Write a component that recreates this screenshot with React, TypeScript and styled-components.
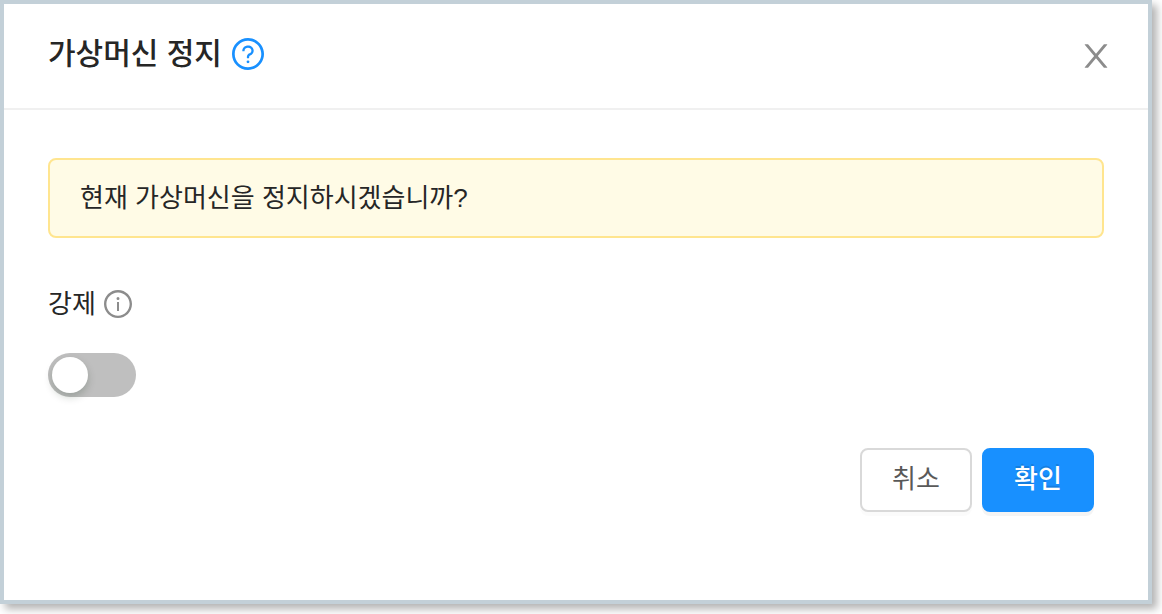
import React, { useState } from "react";
import styled, { createGlobalStyle } from "styled-components";

const GlobalStyle = createGlobalStyle`
  *, *::before, *::after { box-sizing: border-box; }
  body {
    margin: 0;
    background: #fff;
    color: #262626;
    font-family: "Liberation Sans", "Noto Sans CJK KR", sans-serif;
    font-size: 26px;
    line-height: 44px;
  }
`;

const Dialog = styled.section`
  margin: 0 10px 10px 0;
  border: 4px solid #c3d0d8;
  background: #fff;
  box-shadow: 5px 5px 8px 0 rgba(0, 0, 0, 0.3);
`;

const Header = styled.header`
  display: flex;
  align-items: center;
  justify-content: space-between;
  height: 106px;
  padding: 0 36px 4px 44px;
  border-bottom: 2px solid #f0f0f0;
`;

const TitleGroup = styled.div`
  display: flex;
  align-items: center;
  gap: 10px;
`;

const Title = styled.h1`
  margin: 0;
  font-size: 30px;
  font-weight: 500;
  line-height: 44px;
`;

const IconButton = styled.button<{ $color: string }>`
  display: flex;
  padding: 0;
  border: 0;
  background: none;
  color: ${(p) => p.$color};
  cursor: pointer;
`;

const CloseButton = styled(IconButton)`
  padding-top: 4px;
`;

const Icon = styled.svg<{ $size: number }>`
  display: block;
  width: ${(p) => p.$size}px;
  height: ${(p) => p.$size}px;
  fill: currentColor;
`;

const Body = styled.form`
  padding: 48px 44px 88px;
`;

const Alert = styled.div`
  padding: 16px 30px;
  border: 2px solid #ffe58f;
  border-radius: 8px;
  background: #fffbe6;
`;

const Field = styled.div`
  display: flex;
  flex-direction: column;
  align-items: flex-start;
  gap: 27px;
  margin-top: 44px;
`;

const LabelRow = styled.div`
  display: flex;
  align-items: center;
  gap: 8px;
`;

const Switch = styled.input`
  appearance: none;
  display: flex;
  width: 88px;
  height: 44px;
  margin: 0;
  padding: 4px;
  border-radius: 22px;
  background: #bfbfbf;
  cursor: pointer;

  &::before {
    content: "";
    width: 36px;
    height: 36px;
    border-radius: 50%;
    background: #fff;
    box-shadow: 0 4px 8px rgba(0, 35, 11, 0.2);
  }

  &:checked {
    justify-content: flex-end;
    background: #1890ff;
  }
`;

const Actions = styled.div`
  display: flex;
  justify-content: flex-end;
  gap: 10px;
  margin-top: 51px;
  padding-right: 10px;
`;

const Button = styled.button<{ $primary?: boolean }>`
  min-width: 112px;
  height: 64px;
  padding: 0 28px 2px;
  border: 2px solid ${(p) => (p.$primary ? "#1890ff" : "#d9d9d9")};
  border-radius: 8px;
  background: ${(p) => (p.$primary ? "#1890ff" : "#fff")};
  color: ${(p) => (p.$primary ? "#fff" : "#595959")};
  box-shadow: 0 4px 0 rgba(0, 0, 0, ${(p) => (p.$primary ? 0.045 : 0.016)});
  text-shadow: ${(p) => (p.$primary ? "0 -2px 0 rgba(0, 0, 0, 0.12)" : "none")};
  font: inherit;
  font-weight: ${(p) => (p.$primary ? 500 : 400)};
  cursor: pointer;
`;

const RING =
  "M512 64C264.6 64 64 264.6 64 512s200.6 448 448 448 448-200.6 448-448S759.4 64 512 64zm0 820c-205.4 0-372-166.6-372-372s166.6-372 372-372 372 166.6 372 372-166.6 372-372 372z";
const QUESTION =
  "M623.6 316.7C593.6 290.4 554 276 512 276s-81.6 14.5-111.6 40.7C369.2 344 352 380.7 352 420v7.6c0 4.4 3.6 8 8 8h48c4.4 0 8-3.6 8-8V420c0-44.1 43.1-80 96-80s96 35.9 96 80c0 31.1-22 59.6-56.1 72.7-21.2 8.1-39.2 22.3-52.1 40.9-13.1 19-19.9 41.8-19.9 64.9V620c0 4.4 3.6 8 8 8h48c4.4 0 8-3.6 8-8v-22.7a48.3 48.3 0 0130.9-44.8c59-22.7 97.1-74.7 97.1-132.5.1-39.3-17.1-76-48.3-103.3zM472 732a40 40 0 1080 0 40 40 0 10-80 0z";
const INFO =
  "M464 336a48 48 0 1096 0 48 48 0 10-96 0zm72 112h-48c-4.4 0-8 3.6-8 8v272c0 4.4 3.6 8 8 8h48c4.4 0 8-3.6 8-8V456c0-4.4-3.6-8-8-8z";
const CLOSE =
  "M563.8 512l262.5-312.9c4.4-5.2.7-13.1-6.1-13.1h-79.8c-4.7 0-9.2 2.1-12.3 5.7L511.6 449.8 295.1 191.7c-3-3.6-7.5-5.7-12.3-5.7H203c-6.8 0-10.5 7.9-6.1 13.1L459.4 512 196.9 824.9A7.95 7.95 0 00203 838h79.8c4.7 0 9.2-2.1 12.3-5.7l216.5-258.1 216.5 258.1c3 3.6 7.5 5.7 12.3 5.7h79.8c6.8 0 10.5-7.9 6.1-13.1L563.8 512z";

const Glyph = ({ size, paths }: { size: number; paths: string[] }) => (
  <Icon $size={size} viewBox="64 64 896 896" aria-hidden="true">
    {paths.map((d) => (
      <path key={d} d={d} />
    ))}
  </Icon>
);

export default function App() {
  const [forced, setForced] = useState(false);

  return (
    <>
      <GlobalStyle />
      <Dialog role="dialog" aria-labelledby="dialog-title">
        <Header>
          <TitleGroup>
            <Title id="dialog-title">가상머신 정지</Title>
            <IconButton type="button" $color="#1890ff" aria-label="도움말">
              <Glyph size={32} paths={[RING, QUESTION]} />
            </IconButton>
          </TitleGroup>
          <CloseButton type="button" $color="#8c8c8c" aria-label="닫기">
            <Glyph size={32} paths={[CLOSE]} />
          </CloseButton>
        </Header>
        <Body onSubmit={(e) => e.preventDefault()}>
          <Alert role="alert">현재 가상머신을 정지하시겠습니까?</Alert>
          <Field>
            <LabelRow>
              <label htmlFor="forced">강제</label>
              <IconButton type="button" $color="#8c8c8c" aria-label="강제 정보">
                <Glyph size={28} paths={[RING, INFO]} />
              </IconButton>
            </LabelRow>
            <Switch
              id="forced"
              type="checkbox"
              role="switch"
              checked={forced}
              onChange={(e) => setForced(e.target.checked)}
            />
          </Field>
          <Actions>
            <Button type="button">취소</Button>
            <Button type="submit" $primary>
              확인
            </Button>
          </Actions>
        </Body>
      </Dialog>
    </>
  );
}
